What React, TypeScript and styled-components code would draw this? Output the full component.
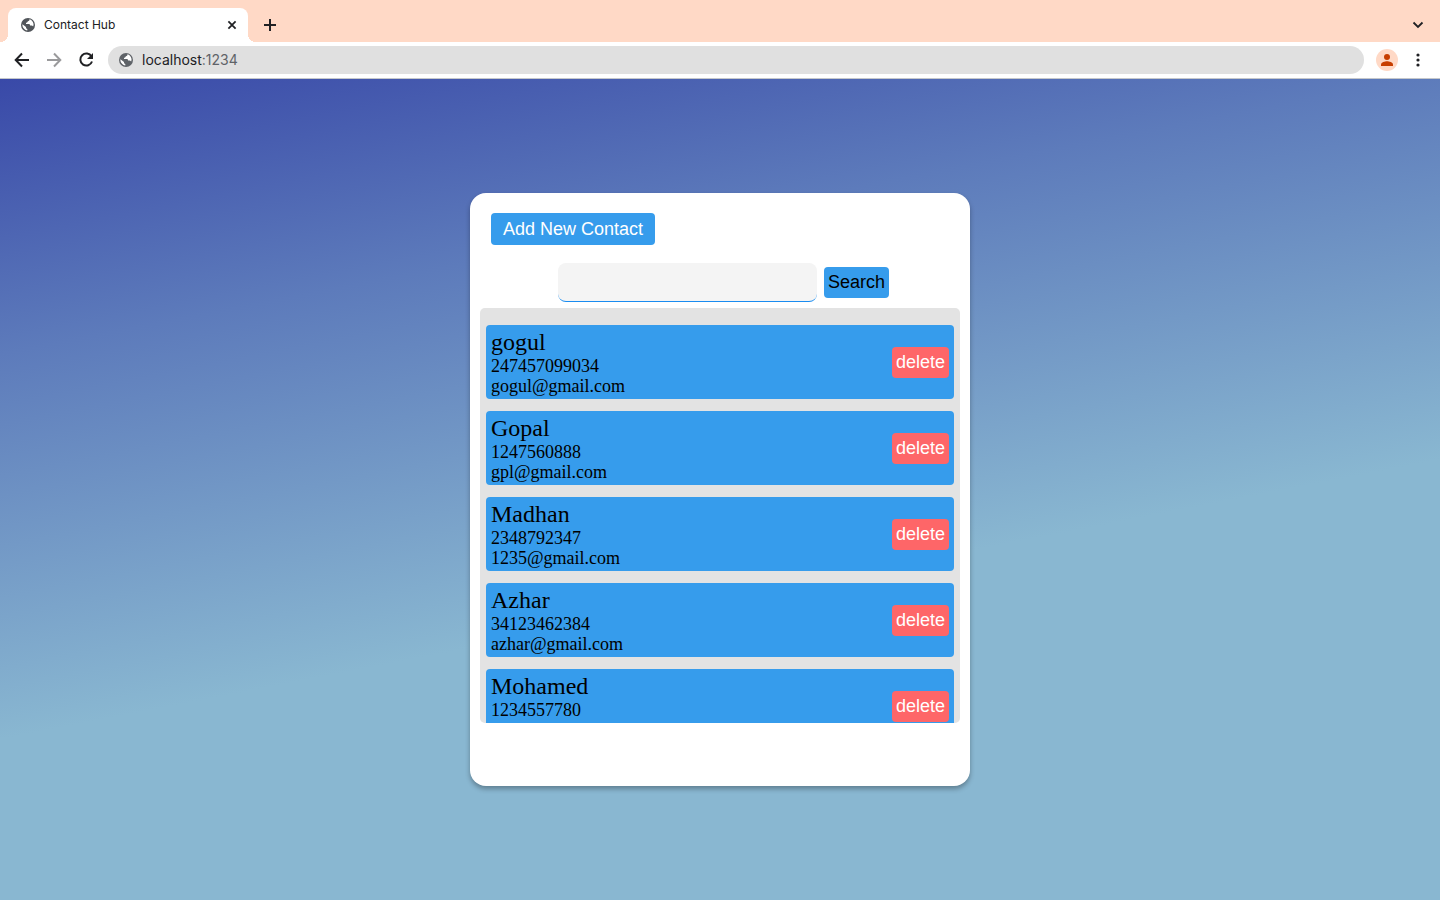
import React from 'react';
import styled, { createGlobalStyle } from 'styled-components';

const GlobalStyle = createGlobalStyle`
  * { box-sizing: border-box; }
  html, body, #root { height: 100%; }
  body { margin: 0; font-family: "Liberation Serif", serif; color: #000; }
`;

const Browser = styled.div`
  min-height: 100%;
  display: flex;
  flex-direction: column;
`;

const TabStrip = styled.header`
  height: 42px;
  display: flex;
  align-items: flex-end;
  padding: 0 12px 0 8px;
  background: #ffd9c6;
  font-family: Inter, sans-serif;
`;

const Tab = styled.div`
  position: relative;
  width: 240px;
  height: 34px;
  display: flex;
  align-items: center;
  gap: 8px;
  padding: 0 8px 0 12px;
  border-radius: 8px 8px 0 0;
  background: #fff;
  color: #202124;
  font-size: 12px;
  line-height: 16px;

  &::before,
  &::after {
    content: "";
    position: absolute;
    bottom: 0;
    width: 8px;
    height: 8px;
  }
  &::before {
    right: 100%;
    background: radial-gradient(circle at 0 0, transparent 8px, #fff 8px);
  }
  &::after {
    left: 100%;
    background: radial-gradient(circle at 100% 0, transparent 8px, #fff 8px);
  }
`;

const TabTitle = styled.span`
  flex: 1;
`;

const IconButton = styled.button<{ $size: number }>`
  width: ${(p) => p.$size}px;
  height: ${(p) => p.$size}px;
  flex: none;
  display: flex;
  align-items: center;
  justify-content: center;
  padding: 0;
  border: 0;
  border-radius: 50%;
  background: transparent;
  color: #202124;

  &:disabled { color: #9a9a9c; }
`;

const StripActions = styled.div`
  flex: 1;
  height: 34px;
  display: flex;
  align-items: center;
  justify-content: space-between;
  padding-left: 12px;
`;

const Toolbar = styled.nav`
  height: 37px;
  display: flex;
  align-items: center;
  padding: 0 12px;
  gap: 12px;
  background: #fff;
  border-bottom: 1px solid #c4c7cb;
`;

const ToolbarActions = styled.div`
  display: flex;
  align-items: center;
  gap: 10px;
`;

const AddressBar = styled.div`
  flex: 1;
  height: 28px;
  display: flex;
  align-items: center;
  gap: 8px;
  padding: 0 10px;
  border-radius: 14px;
  background: #e0e0e0;
`;

const Address = styled.a`
  color: #5f6368;
  font: 14px/20px Inter, sans-serif;
  text-decoration: none;

  strong { font-weight: 400; color: #202124; }
`;

const Avatar = styled.button`
  width: 22px;
  height: 22px;
  padding: 0;
  display: flex;
  align-items: center;
  justify-content: center;
  border: 0;
  border-radius: 50%;
  background: #ffd9c6;
  color: #c73e00;
`;

const Page = styled.main`
  flex: 1;
  display: flex;
  align-items: center;
  justify-content: center;
  padding: 20px;
  background: linear-gradient(169deg, #3949a8 0%, #5d7bbb 25%, #89b7d1 60%);
`;

const Card = styled.section`
  width: 100%;
  max-width: 500px;
  padding: 20px 10px 63px;
  border-radius: 16px;
  background: #fff;
  box-shadow: 0 3px 5px rgba(0, 0, 0, 0.3);
`;

const Button = styled.button<{ $tone?: 'danger'; $light?: boolean; $wide?: boolean }>`
  flex: none;
  padding: ${(p) => (p.$wide ? '6px 12px 5px' : '5px 4px')};
  border: 0;
  border-radius: 4px;
  background: ${(p) => (p.$tone === 'danger' ? '#fe6668' : '#369cec')};
  color: ${(p) => (p.$light ? '#fff' : '#000')};
  font: 18px/21px "Liberation Sans", Arial, sans-serif;
`;

const CardHeader = styled.div`
  display: flex;
  padding: 0 11px;
`;

const SearchForm = styled.form`
  display: flex;
  align-items: center;
  justify-content: center;
  gap: 7px;
  margin: 18px 0 6px;
  padding-left: 7px;
`;

const SearchInput = styled.input`
  width: 259px;
  height: 39px;
  padding: 0 10px;
  border: 0;
  border-bottom: 1px solid #1a8cf0;
  border-radius: 8px;
  background: #f4f4f4;
  font: 18px/21px "Liberation Sans", Arial, sans-serif;
`;

const ContactList = styled.ul`
  height: 415px;
  margin: 0;
  padding: 17px 6px;
  display: flex;
  flex-direction: column;
  gap: 12px;
  overflow: auto;
  scrollbar-width: none;
  list-style: none;
  border-radius: 5px;
  background: #e3e3e3;
`;

const ContactRow = styled.li`
  flex: none;
  display: flex;
  align-items: center;
  justify-content: space-between;
  padding: 3px 5px;
  border-radius: 4px;
  background: #369cec;
`;

const ContactName = styled.h2`
  margin: 0;
  font-size: 24px;
  font-weight: 400;
  line-height: 28px;
`;

const ContactDetail = styled.p`
  margin: 0;
  font-size: 18px;
  line-height: 20px;
`;

const contacts = [
  { name: 'gogul', phone: '247457099034', email: 'gogul@gmail.com' },
  { name: 'Gopal', phone: '1247560888', email: 'gpl@gmail.com' },
  { name: 'Madhan', phone: '2348792347', email: '1235@gmail.com' },
  { name: 'Azhar', phone: '34123462384', email: 'azhar@gmail.com' },
  { name: 'Mohamed', phone: '1234557780', email: 'mohamed@gmail.com' },
];

const Globe = ({ color }: { color: string }) => (
  <svg width="16" height="16" viewBox="0 0 16 16" aria-hidden="true">
    <circle cx="8" cy="8" r="7" fill={color} />
    <path
      d="M9.4 2.3c.3 1.3-.6 1.900-1.700 2.100-.3.900-.9 1.300-1.700 1.400v1.300h2.700c1 0 1.400.7 1.400 1.500h1.400c.7 0 1.200.4 1.600 1 .4-1 .6-1.900.3-3.100-.5-2.100-2-3.700-4-4.200zM2.400 7.300c-.2 3.100 1.900 5.700 4.900 6.200v-1.500c-.8 0-1.300-.6-1.300-1.400v-.7z"
      fill="#fff"
    />
  </svg>
);

const Stroke = ({ d, size = 20, width = 2 }: { d: string; size?: number; width?: number }) => (
  <svg width={size} height={size} viewBox="0 0 20 20" fill="none" stroke="currentColor" strokeWidth={width} aria-hidden="true">
    <path d={d} />
  </svg>
);

export default function App() {
  return (
    <Browser>
      <GlobalStyle />
      <TabStrip>
        <Tab>
          <Globe color="#51555a" />
          <TabTitle>Contact Hub</TabTitle>
          <IconButton $size={16} aria-label="Close tab">
            <Stroke size={16} width={2.2} d="M5.500 5.500l9 9M14.500 5.500l-9 9" />
          </IconButton>
        </Tab>
        <StripActions>
          <IconButton $size={20} aria-label="New tab">
            <Stroke d="M10 4v12M4 10h12" />
          </IconButton>
          <IconButton $size={20} aria-label="Search tabs">
            <Stroke width={1.8} d="M5.500 7.500l4.500 4.500L14.500 7.500" />
          </IconButton>
        </StripActions>
      </TabStrip>
      <Toolbar>
        <IconButton $size={20} aria-label="Back">
          <Stroke d="M17 10H4.500M10 3.500L3.700 10l6.300 6.500" />
        </IconButton>
        <IconButton $size={20} aria-label="Forward" disabled>
          <Stroke d="M3 10h12.500M10 3.500l6.300 6.500-6.300 6.500" />
        </IconButton>
        <IconButton $size={20} aria-label="Reload">
          <svg width="20" height="20" viewBox="0 0 20 20" aria-hidden="true">
            <path d="M15.500 6.500A6 6 0 1 0 16 11.500" fill="none" stroke="currentColor" strokeWidth="2" />
            <path d="M17 3v6h-6z" fill="currentColor" />
          </svg>
        </IconButton>
        <AddressBar>
          <Globe color="#5f6368" />
          <Address href="#"><strong>localhost</strong>:1234</Address>
        </AddressBar>
        <ToolbarActions>
          <Avatar aria-label="Profile">
            <svg width="14" height="14" viewBox="0 0 14 14" fill="currentColor" aria-hidden="true">
              <circle cx="7" cy="4" r="3" />
              <path d="M1 13v-1.500C1 9.300 5 8.300 7 8.300s6 1 6 3.200V13z" />
            </svg>
          </Avatar>
          <IconButton $size={20} aria-label="Menu">
            <svg width="20" height="20" viewBox="0 0 20 20" fill="currentColor" aria-hidden="true">
              <circle cx="10" cy="5" r="1.600" />
              <circle cx="10" cy="10" r="1.600" />
              <circle cx="10" cy="15" r="1.600" />
            </svg>
          </IconButton>
        </ToolbarActions>
      </Toolbar>
      <Page>
        <Card>
          <CardHeader>
            <Button $light $wide>Add New Contact</Button>
          </CardHeader>
          <SearchForm onSubmit={(e) => e.preventDefault()}>
            <SearchInput type="text" aria-label="Search contacts" />
            <Button>Search</Button>
          </SearchForm>
          <ContactList>
            {contacts.map((c) => (
              <ContactRow key={c.name}>
                <div>
                  <ContactName>{c.name}</ContactName>
                  <ContactDetail>{c.phone}</ContactDetail>
                  <ContactDetail>{c.email}</ContactDetail>
                </div>
                <Button $tone="danger" $light>delete</Button>
              </ContactRow>
            ))}
          </ContactList>
        </Card>
      </Page>
    </Browser>
  );
}
